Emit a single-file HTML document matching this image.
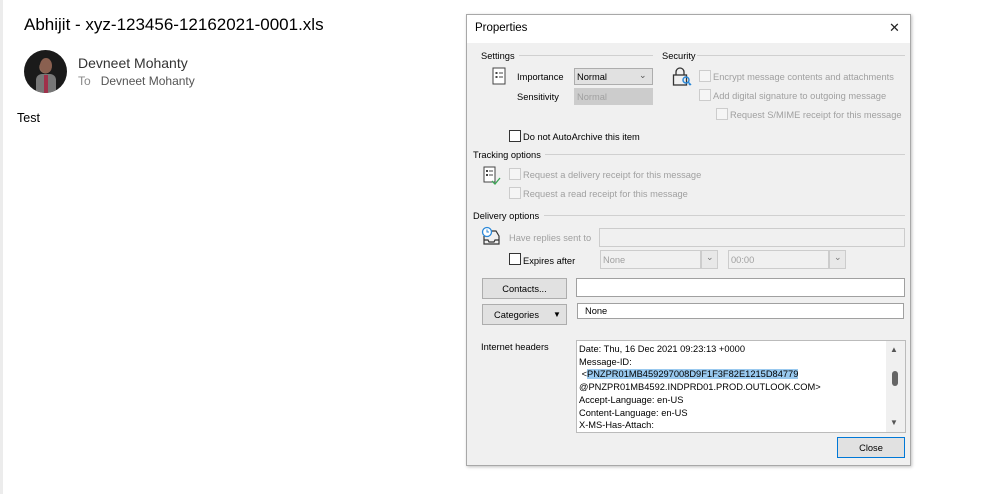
<!DOCTYPE html>
<html><head><meta charset="utf-8"><style>
*{box-sizing:border-box;margin:0;padding:0}
body{width:999px;height:494px;background:#fff;position:relative;overflow:hidden;font-family:"Liberation Sans",sans-serif;color:#000}
.a{position:absolute;white-space:nowrap}
.t{font-size:9.3px;line-height:12px}
.g{color:#a0a0a0}
.cb{position:absolute;width:12px;height:12px;border:1px solid #333;background:#fff}
.cbd{border-color:#ccc;background:#f5f5f5}
.ln{position:absolute;height:1px;background:#d0d0d0}
.sel{position:absolute;border:1px solid #adadad;background:#e1e1e1}
.btn{position:absolute;border:1px solid #adadad;background:#e1e1e1;font-size:9.3px;text-align:center}
.inp{position:absolute;border:1px solid #a0a0a0;background:#fff}
</style></head><body>
<div class="a" style="left:0;top:0;width:3px;height:494px;background:#ececec"></div>
<div class="a" style="left:24px;top:15px;font-size:17px">Abhijit - xyz-123456-12162021-0001.xls</div>
<div class="a" style="left:24px;top:50px;width:43px;height:43px;border-radius:50%;background:radial-gradient(circle at 50% 40%,#8a6a5a 0 18%,#1a1a1a 19%);overflow:hidden">
<div style="position:absolute;left:12px;top:24px;width:20px;height:20px;background:#777;border-radius:6px 6px 0 0"></div>
<div style="position:absolute;left:20px;top:25px;width:4px;height:18px;background:#a0304a"></div>
<div style="position:absolute;left:16px;top:8px;width:12px;height:15px;background:#8a6050;border-radius:50%"></div></div>
<div class="a" style="left:78px;top:55px;font-size:14px;color:#333">Devneet Mohanty</div>
<div class="a" style="left:78px;top:74px;font-size:12px;color:#555"><span style="color:#888">To</span>&nbsp;&nbsp; Devneet Mohanty</div>
<div class="a" style="left:17px;top:111px;font-size:12.5px">Test</div>

<div class="a" style="left:466px;top:14px;width:445px;height:452px;border:1px solid #a8a8a8;background:#f0f0f0;box-shadow:1px 1px 3px rgba(0,0,0,.25)">
<div style="position:absolute;left:0;top:0;width:443px;height:28px;background:#fff"></div>
</div>
<div class="a" style="left:475px;top:22px;font-size:11.5px">Properties</div>
<div class="a" style="left:889px;top:20px;font-size:13px;color:#222">✕</div>

<div class="a t" style="left:481px;top:50px">Settings</div><div class="ln" style="left:519px;top:55px;width:134px"></div>
<div class="a t" style="left:662px;top:50px">Security</div><div class="ln" style="left:697px;top:55px;width:208px"></div>
<svg class="a" style="left:492px;top:67px" width="15" height="19"><rect x="1" y="1" width="12" height="16" fill="#fff" stroke="#444"/><rect x="3.5" y="5" width="2" height="2" fill="#444"/><rect x="3.5" y="9" width="2" height="2" fill="#444"/><line x1="7" y1="6" x2="11" y2="6" stroke="#444"/><line x1="7" y1="10" x2="11" y2="10" stroke="#444"/></svg>
<div class="a t" style="left:517px;top:71px">Importance</div>
<div class="sel" style="left:574px;top:68px;width:79px;height:17px"><span class="a t" style="left:2px;top:2px">Normal</span><span class="a" style="left:64px;top:1px;font-size:9px;color:#555">⌄</span></div>
<div class="a t" style="left:517px;top:91px">Sensitivity</div>
<div class="sel" style="left:574px;top:88px;width:79px;height:17px;background:#ccc;border-color:#ccc"><span class="a t g" style="left:2px;top:2px">Normal</span></div>
<svg class="a" style="left:672px;top:66px" width="20" height="22"><path d="M4 9V6a4 4 0 0 1 8 0v3" fill="none" stroke="#333" stroke-width="1.3"/><rect x="1.5" y="9" width="13" height="10" fill="none" stroke="#333" stroke-width="1.3"/><circle cx="14" cy="14" r="3" fill="none" stroke="#2b88d8" stroke-width="1.5"/><path d="M16 16l3 3M18 18l-1 1" stroke="#2b88d8" stroke-width="1.5"/></svg>
<div class="cb cbd" style="left:699px;top:70px"></div><div class="a t g" style="left:713px;top:71px">Encrypt message contents and attachments</div>
<div class="cb cbd" style="left:699px;top:89px"></div><div class="a t g" style="left:713px;top:90px">Add digital signature to outgoing message</div>
<div class="cb cbd" style="left:716px;top:108px"></div><div class="a t g" style="left:730px;top:109px">Request S/MIME receipt for this message</div>
<div class="cb" style="left:509px;top:130px"></div><div class="a t" style="left:523px;top:131px">Do not AutoArchive this item</div>

<div class="a t" style="left:473px;top:149px">Tracking options</div><div class="ln" style="left:545px;top:154px;width:360px"></div>
<svg class="a" style="left:483px;top:166px" width="18" height="20"><rect x="1" y="1" width="11" height="15" fill="#fff" stroke="#444"/><rect x="3" y="4" width="2" height="2" fill="#444"/><rect x="3" y="8" width="2" height="2" fill="#444"/><line x1="6" y1="5" x2="10" y2="5" stroke="#444"/><line x1="6" y1="9" x2="10" y2="9" stroke="#444"/><path d="M9 15l3 3 5-6" fill="none" stroke="#3aa655" stroke-width="1.3"/></svg>
<div class="cb cbd" style="left:509px;top:168px"></div><div class="a t g" style="left:523px;top:169px">Request a delivery receipt for this message</div>
<div class="cb cbd" style="left:509px;top:187px"></div><div class="a t g" style="left:523px;top:188px">Request a read receipt for this message</div>

<div class="a t" style="left:473px;top:210px">Delivery options</div><div class="ln" style="left:544px;top:215px;width:361px"></div>
<svg class="a" style="left:481px;top:226px" width="20" height="20"><path d="M3 10v8h15v-8l-3-5h-5" fill="none" stroke="#333" stroke-width="1.2"/><path d="M3 14h4l1 2h5l1-2h4" fill="none" stroke="#333" stroke-width="1.2"/><circle cx="6" cy="6" r="4.5" fill="#fff" stroke="#2b88d8" stroke-width="1.3"/><path d="M6 3.5V6h2" fill="none" stroke="#2b88d8"/></svg>
<div class="a t g" style="left:509px;top:232px">Have replies sent to</div>
<div class="inp" style="left:599px;top:228px;width:306px;height:19px;background:#f0f0f0;border-color:#ccc"></div>
<div class="cb" style="left:509px;top:253px"></div><div class="a t" style="left:523px;top:255px">Expires after</div>
<div class="inp" style="left:600px;top:250px;width:101px;height:19px;background:#f0f0f0;border-color:#ccc"><span class="a t g" style="left:2px;top:3px">None</span></div>
<div class="inp" style="left:701px;top:250px;width:17px;height:19px;background:#e8e8e8;border-color:#ccc"><span class="a" style="left:4px;top:1px;font-size:9px;color:#777">⌄</span></div>
<div class="inp" style="left:728px;top:250px;width:101px;height:19px;background:#f0f0f0;border-color:#ccc"><span class="a t g" style="left:2px;top:3px">00:00</span></div>
<div class="inp" style="left:829px;top:250px;width:17px;height:19px;background:#e8e8e8;border-color:#ccc"><span class="a" style="left:4px;top:1px;font-size:9px;color:#777">⌄</span></div>

<div class="btn" style="left:482px;top:278px;width:85px;height:21px;line-height:20px">Contacts...</div>
<div class="inp" style="left:576px;top:278px;width:329px;height:19px"></div>
<div class="btn" style="left:482px;top:304px;width:85px;height:21px;line-height:20px"><span style="position:relative;left:-8px">Categories</span><span class="a" style="left:70px;top:0;font-size:8px">▼</span></div>
<div class="inp" style="left:577px;top:303px;width:327px;height:16px"><span class="a t" style="left:7px;top:1px">None</span></div>

<div class="a t" style="left:481px;top:341px">Internet headers</div>
<div class="inp" style="left:576px;top:340px;width:330px;height:93px;border-color:#bbb"></div>
<div class="a" style="left:886px;top:341px;width:19px;height:91px;background:#f0f0f0"></div>
<div class="a" style="left:890px;top:345px;font-size:8px;color:#555">▲</div>
<div class="a" style="left:892px;top:371px;width:6px;height:15px;border-radius:3px;background:#666"></div>
<div class="a" style="left:890px;top:418px;font-size:8px;color:#555">▼</div>
<div class="a t" style="left:579px;top:343px;line-height:12.7px">Date: Thu, 16 Dec 2021 09:23:13 +0000<br>Message-ID:<br>&nbsp;&lt;<span style="background:#99c9ef">PNZPR01MB459297008D9F1F3F82E1215D84779</span><br>@PNZPR01MB4592.INDPRD01.PROD.OUTLOOK.COM&gt;<br>Accept-Language: en-US<br>Content-Language: en-US<br>X-MS-Has-Attach:</div>

<div class="btn" style="left:837px;top:437px;width:68px;height:21px;line-height:20px;border:1px solid #0078d7">Close</div>
</body></html>
